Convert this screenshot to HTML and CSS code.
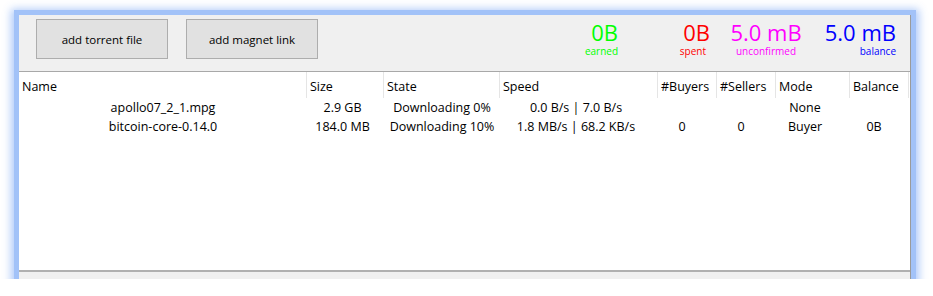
FILE: index.html
```html
<!DOCTYPE html>
<html>
<head>
  <title>torrent client</title>
  <link rel="stylesheet" href="styles.css">
</head>
<body>

  <div class="window">
    <div class="toolbar">
      <button class="btn">add torrent file</button>
      <button class="btn">add magnet link</button>

      <div class="stats">
        <div class="stat earned">
          <div class="amount">0B</div>
          <div class="label">earned</div>
        </div>
        <div class="stat spent">
          <div class="amount">0B</div>
          <div class="label">spent</div>
        </div>
        <div class="stat unconfirmed">
          <div class="amount">5.0 mB</div>
          <div class="label">unconfirmed</div>
        </div>
        <div class="stat balance">
          <div class="amount">5.0 mB</div>
          <div class="label">balance</div>
        </div>
      </div>
    </div>

    <div class="table">
      <div class="row head">
        <div>Name</div>
        <div>Size</div>
        <div>State</div>
        <div>Speed</div>
        <div>#Buyers</div>
        <div>#Sellers</div>
        <div>Mode</div>
        <div>Balance</div>
      </div>
      <div class="row">
        <div>apollo07_2_1.mpg</div>
        <div>2.9 GB</div>
        <div>Downloading 0%</div>
        <div>0.0 B/s | 7.0 B/s</div>
        <div></div>
        <div></div>
        <div>None</div>
        <div></div>
      </div>
      <div class="row">
        <div>bitcoin-core-0.14.0</div>
        <div>184.0 MB</div>
        <div>Downloading 10%</div>
        <div>1.8 MB/s | 68.2 KB/s</div>
        <div>0</div>
        <div>0</div>
        <div>Buyer</div>
        <div>0B</div>
      </div>
    </div>

    <div class="statusbar"></div>
  </div>

</body>
</html>
```

FILE: styles.css
```css
body {
  margin: 0;
  padding: 15px 0 0 19px;
  background: #fff;
  font-family: 'Open Sans', 'Noto Sans', sans-serif;
}

.window {
  width: 891px;
  height: 264px;
  background: #f0f0f0;
  border-right: 1px solid #9a9a9a;
  display: flex;
  flex-direction: column;
  box-shadow: 0 0 0 5px #a2c2f8, 0 2px 8px 8px rgba(162, 194, 248, 0.85);
}

.toolbar {
  height: 56px;
  border-bottom: 1px solid #a8a8a8;
  display: flex;
  align-items: flex-start;
  padding: 4px 14px 0 17px;
  box-sizing: border-box;
  height: 57px;
}

.btn {
  width: 132px;
  height: 40px;
  margin-right: 18px;
  background: #e1e1e1;
  border: 1px solid #adadad;
  font-family: 'Open Sans', sans-serif;
  font-size: 11.5px;
  color: #000;
  padding: 0;
}

.stats {
  margin-left: auto;
  display: flex;
  padding-top: 2px;
}

.stat {
  text-align: right;
}

.amount {
  font-size: 22px;
  line-height: 22px;
}

.label {
  font-size: 10px;
  line-height: 12px;
  margin-top: 2px;
}

.earned {
  width: 40px;
  color: #00ff00;
}

.spent {
  width: 40px;
  margin-left: 52px;
  color: #ff0000;
}

.spent .label {
  padding-right: 4px;
}

.unconfirmed {
  width: 72px;
  margin-left: 20px;
  color: #ff00ff;
  text-align: center;
}

.balance {
  width: 72px;
  margin-left: 22px;
  color: #0000ff;
}

.table {
  flex: 1;
  background: #fff;
  font-size: 12.5px;
  color: #000;
}

.row {
  display: grid;
  grid-template-columns: 288px 77px 116px 158px 59px 59px 74px 59px;
  height: 19px;
  line-height: 19px;
  text-align: center;
  white-space: nowrap;
}

.row > div:nth-child(2),
.row > div:nth-child(4) {
  padding-right: 6px;
}

.row > div:nth-child(n+5) {
  padding-right: 11px;
}

.row > div:nth-child(7) {
  padding-right: 16px;
}

.row.head {
  height: 26px;
  line-height: 22px;
  text-align: left;
}

.row.head > div {
  padding: 4px 0 0 3px;
  border-right: 1px solid #e5e5e5;
}

.statusbar {
  height: 7px;
  border-top: 2px solid #b0b0b0;
  background: #f0f0f0;
}
```
